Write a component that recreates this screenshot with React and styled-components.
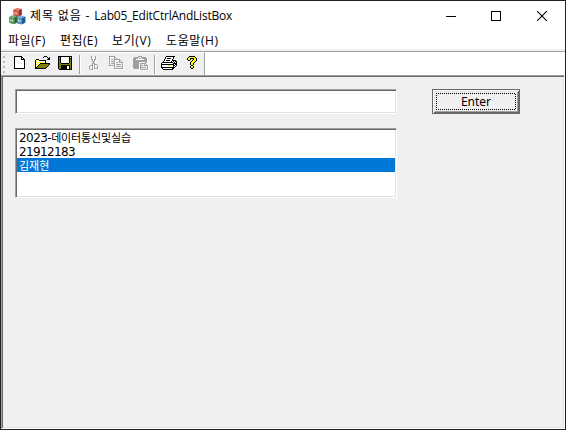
import React from "react";
import styled, { createGlobalStyle } from "styled-components";

const GlobalStyle = createGlobalStyle`
  * { box-sizing: border-box; }
  html, body { margin: 0; padding: 0; overflow: hidden; }
`;

const Window = styled.div`
  width: 566px;
  height: 430px;
  display: flex;
  flex-direction: column;
  border: 1px solid #232124;
  background: #fff;
  color: #000;
  font-family: "Open Sans", "Noto Sans CJK KR", sans-serif;
  font-size: 12px;
  user-select: none;
`;

const TitleBar = styled.header`
  display: flex;
  align-items: center;
  height: 30px;
  padding-left: 8px;
`;

const Title = styled.h1`
  flex: 1;
  margin: 0 0 0 4px;
  font-size: 12px;
  font-weight: 400;
  line-height: 20px;
  white-space: pre;
`;

const Run = styled.span`
  letter-spacing: ${(p) => p.$tracking};
`;

const CaptionButton = styled.button`
  display: flex;
  align-items: center;
  justify-content: center;
  width: 46px;
  height: 30px;
  padding: 0 0 0 ${(p) => p.$nudge || 0}px;
  border: 0;
  background: transparent;
`;

const MenuBar = styled.nav`
  display: flex;
  height: 18px;
  padding-left: 7px;
`;

const MenuItem = styled.span`
  width: ${(p) => p.$width}px;
  line-height: 19px;
  white-space: nowrap;
  letter-spacing: ${(p) => p.$tracking};
`;

const ToolBand = styled.div`
  height: 26px;
  border-top: 2px solid #f0f0f0;
  flex: none;
`;

const ToolRow = styled.div`
  height: 24px;
  border-top: 1px solid #a0a0a0;
`;

const ToolBar = styled.div`
  display: flex;
  width: 204px;
  height: 23px;
  padding-top: 3px;
  background: #f0f0f0;
  border-top: 1px solid #fff;
  border-right: 1px solid #a0a0a0;
`;

const Grip = styled.div`
  width: 2px;
  height: 17px;
  margin: 0 9px 0 2px;
  background: repeating-linear-gradient(#b8b8b8 0 2px, transparent 2px 5px);
`;

const Tool = styled.span`
  width: ${(p) => p.$width}px;
  height: 18px;
  flex: none;
`;

const Separator = styled.span`
  width: 2px;
  height: 19px;
  margin: -1px ${(p) => p.$after}px 0 0;
  border-left: 1px solid #a0a0a0;
  border-right: 1px solid #fff;
`;

const View = styled.main`
  flex: 1;
  display: flex;
  gap: 35px;
  padding: 13px 0 0 13px;
  background: #f0f0f0;
  border: 1px solid;
  border-color: #a0a0a0 #fff #fff #a0a0a0;
  box-shadow: inset 1px 1px #696969, inset -1px -1px #e3e3e3;
`;

const Fields = styled.section`
  display: flex;
  flex-direction: column;
  gap: 14px;
  width: 382px;
`;

const sunken = `
  border: 1px solid;
  border-color: #a0a0a0 #fff #fff #a0a0a0;
  box-shadow: inset 1px 1px #696969, inset -1px -1px #e3e3e3;
  background: #fff;
`;

const TextInput = styled.input`
  ${sunken}
  width: 382px;
  height: 25px;
  padding: 2px 4px;
  outline: 0;
  border-radius: 0;
`;

const ListBox = styled.ul`
  ${sunken}
  height: 70px;
  margin: 0;
  padding: 1px;
  list-style: none;
  font-family: "DejaVu Sans", sans-serif;
`;

const ListItem = styled.li`
  display: flex;
  height: 14px;
  padding: 1px 0 0 2px;
  font-size: 12px;
  line-height: 14px;
  white-space: nowrap;
  color: ${(p) => (p.$selected ? "#fff" : "#000")};
  background: ${(p) => (p.$selected ? "#0078d7" : "transparent")};
`;

const Hangul = styled.span`
  line-height: 12px;
  font-family: "Noto Sans CJK KR", sans-serif;
  font-size: 11px;
  letter-spacing: ${(p) => p.$tracking || "0"};
`;

const EnterButton = styled.button`
  width: 88px;
  height: 25px;
  padding: 3px;
  border: 1px solid #696969;
  border-radius: 0;
  background: #f0f0f0;
  box-shadow: inset 1px 1px #fff, inset -1px -1px #696969, inset 2px 2px #e3e3e3,
    inset -2px -2px #a0a0a0;
  font-family: "Noto Sans", sans-serif;
  font-size: 12px;
  color: #000;
`;

const FocusRing = styled.span`
  position: relative;
  display: block;
  width: 80px;
  height: 17px;
  line-height: 17px;
  text-align: center;
  svg { position: absolute; left: 0; top: 0; }
`;

const Drawing = styled.svg`
  display: block;
  flex: none;
`;

const INK = {
  k: "#000",
  w: "#fff",
  y: "#ff0",
  o: "#808000",
  d: "#a0a0a0",
  b: "#f0f0f0",
};

function PixelIcon({ rows }) {
  const width = Math.max(...rows.map((r) => r.length));
  return (
    <Drawing width={width} height={rows.length} shapeRendering="crispEdges">
      {rows.flatMap((row, y) =>
        [...row].map((c, x) =>
          INK[c] ? <rect key={`${x}-${y}`} x={x} y={y} width="1" height="1" fill={INK[c]} /> : null
        )
      )}
    </Drawing>
  );
}

const NEW = [
  "kkkkkkkk",
  "kwwwwwwkk",
  "kwwwwwwkwk",
  "kwwwwwwkkkk",
  "kwwwwwwwwwk",
  "kwwwwwwwwwk",
  "kwwwwwwwwwk",
  "kwwwwwwwwwk",
  "kwwwwwwwwwk",
  "kwwwwwwwwwk",
  "kwwwwwwwwwk",
  "kwwwwwwwwwk",
  "kkkkkkkkkkk",
];

const OPEN = [
  ".........kkk",
  "........k...k.k",
  ".............kk",
  ".kkk........kkk",
  "kywykkkkkkk",
  "kwywywywywk",
  "kywywywywyk",
  "kwywykkkkkkkkkk",
  "kywykoooooooook",
  "kwykoooooooook",
  "kykoooooooook",
  "kkoooooooook",
  "kkkkkkkkkkk",
];

const SAVE = [
  "kkkkkkkkkkkkkk",
  "kokwwwwwwwwkwk",
  "kokwwwwwwwwkkk",
  "kokwwwwwwwwkok",
  "kokwwwwwwwwkok",
  "kokwwwwwwwwkok",
  "kokwwwwwwwwkok",
  "kookkkkkkkkook",
  "kooooooooooook",
  "kookkkkkkkkkok",
  "kookkkkkkwwkok",
  "kookkkkkkwwkok",
  "kookkkkkkwwkok",
  ".kkkkkkkkkkkkk",
];

const CUT = [
  "..d...d",
  "..dw..dw",
  "..dw..dw",
  "..ddwddw",
  "...dwdw",
  "...dddw",
  "....dw",
  "...dddw",
  "...dwddd",
  ".dddwdwwd",
  "d..dwdw.dw",
  "dw.dwdw.dw",
  "dw.dwddddw",
  ".dddw.wwww",
  "..www",
];

const COPY = [
  "dddddd",
  "dwwwwdd",
  "dwbbbdwd",
  "dwddbdddddd",
  "dwbbbdwwwwdd",
  "dwddddwbbbdwd",
  "dwbbbdwddbdddd",
  "dwddddwbbbwwwdw",
  "dwbbbdwdddddbdw",
  "ddddddwbbbbbbdw",
  ".wwwwdwdddddbdw",
  ".....dwbbbbbbdw",
  ".....dddddddddw",
  "......wwwwwwwww",
];

const PASTE = [
  ".....dddd",
  ".dddddwwddddd",
  "dddddwddwddddd",
  "dddwwwwwwwwdddw",
  "ddddddddddddddw",
  "ddddddddddddddw",
  "ddddddwwwwwwddw",
  "ddddddwddddddww",
  "ddddddwdbbbdbdw",
  "ddddddwdddbddddw",
  "ddddddwdbbbbbbdw",
  "ddddddwddddddbdw",
  ".dddddwdbbbbbbdw",
  "......wddddddddw",
  "......wwwwwwwwww",
];

const PRINT = [
  ".....kkkkkkkkk",
  "....kwwwwwwwk",
  "....kwkkkkwwk",
  "...kwwwwwwwk",
  "...kwkkkkwwkkkk",
  "..kwwwwwwwkwkwkk",
  ".kkkkkkkkkkkwkwk",
  "kwwwwwwwwwwwkkkk",
  "kkkkkkkkkkkkkwkk",
  "kwwwwwwyyywwkkwk",
  "kwwwwwwwwwwwkwk",
  "kkkkkkkkkkkkkk",
  ".kwwwwwwwwwkk",
  "..kkkkkkkkkk",
];

const HELP = [
  "..kkkkkk",
  ".kyyyyyyk",
  "kyykkkkyyk",
  "kyyk..kyyk",
  ".kk..kyyyk",
  "....kyyyk",
  "...kyyyk",
  "...kyyk",
  "...kyyk",
  "....kk",
  "...kyyk",
  "...kyyk",
  "....kk",
];

const TOOLS = [
  { id: "new", width: 21, rows: NEW },
  { id: "open", width: 23, rows: OPEN },
  { id: "save", width: 21, rows: SAVE },
  { id: "s1", separator: true, after: 8 },
  { id: "cut", width: 20, rows: CUT },
  { id: "copy", width: 24, rows: COPY },
  { id: "paste", width: 21, rows: PASTE },
  { id: "s2", separator: true, after: 5 },
  { id: "print", width: 26, rows: PRINT },
  { id: "help", width: 12, rows: HELP },
];

function Cube({ x, y, light, mid, dark }) {
  return (
    <g transform={`translate(${x} ${y})`}>
      <path d="M0 1.6 3.5 0 8.6.8 5.2 2.4Z" fill={light} />
      <path d="M0 1.6 5.2 2.4V9L.3 7.8Z" fill={mid} />
      <path d="M5.2 2.4 8.6.8V7L5.2 9Z" fill={dark} />
      <path d="M1.7 3.6v2.8M3.6 4v2.6M1.7 5.1l1.9.3" stroke="#fff" strokeWidth=".7" opacity=".8" />
    </g>
  );
}

function AppIcon() {
  return (
    <Drawing width="17" height="17" viewBox="0 0 17 17">
      <Cube x={4.2} y={0} light="#e2786c" mid="#d5483c" dark="#a3261f" />
      <Cube x={0} y={7.2} light="#76ad6c" mid="#4b9a50" dark="#28642f" />
      <Cube x={7.8} y={7.6} light="#78b0da" mid="#4690c6" dark="#205a93" />
    </Drawing>
  );
}

export default function App() {
  return (
    <>
      <GlobalStyle />
      <Window>
        <TitleBar>
          <AppIcon />
          <Title>
            <Run $tracking="0.85px">제목 없음 - </Run>
            <Run $tracking="-0.22px">Lab05_EditCtrlAndListBox</Run>
          </Title>
          <CaptionButton aria-label="Minimize" $nudge={2}>
            <Drawing width="10" height="10" shapeRendering="crispEdges">
              <path d="M0 5.5h10" stroke="#000" />
            </Drawing>
          </CaptionButton>
          <CaptionButton aria-label="Maximize">
            <Drawing width="10" height="10" shapeRendering="crispEdges">
              <path d="M.5.5h9v9h-9z" fill="none" stroke="#000" />
            </Drawing>
          </CaptionButton>
          <CaptionButton aria-label="Close">
            <Drawing width="10" height="10">
              <path d="m0 0 10 10M10 0 0 10" stroke="#000" strokeWidth="1.1" />
            </Drawing>
          </CaptionButton>
        </TitleBar>
        <MenuBar>
          <MenuItem $width={52} $tracking="0.5px">파일(F)</MenuItem>
          <MenuItem $width={52} $tracking="0.4px">편집(E)</MenuItem>
          <MenuItem $width={54} $tracking="0.6px">보기(V)</MenuItem>
          <MenuItem $width={56} $tracking="0.6px">도움말(H)</MenuItem>
        </MenuBar>
        <ToolBand>
          <ToolRow>
            <ToolBar>
              <Grip />
              {TOOLS.map((t) =>
                t.separator ? (
                  <Separator key={t.id} $after={t.after} />
                ) : (
                  <Tool key={t.id} $width={t.width}>
                    <PixelIcon rows={t.rows} />
                  </Tool>
                )
              )}
            </ToolBar>
          </ToolRow>
        </ToolBand>
        <View>
          <Fields>
            <TextInput aria-label="Text" />
            <ListBox>
              <ListItem>
                <Run $tracking="-0.55px">2023-</Run>
                <Hangul $tracking="-0.15px">데이터통신및실습</Hangul>
              </ListItem>
              <ListItem>
                <Run $tracking="-0.65px">21912183</Run>
              </ListItem>
              <ListItem $selected>
                <Hangul>김재현</Hangul>
              </ListItem>
            </ListBox>
          </Fields>
          <EnterButton>
            <FocusRing>
              <Drawing width="80" height="17" shapeRendering="crispEdges">
                <path
                  d="M0 .5h80M0 16.5h80M.5 2v14M79.5 1v15"
                  stroke="#000"
                  strokeDasharray="1 1"
                />
              </Drawing>
              Enter
            </FocusRing>
          </EnterButton>
        </View>
      </Window>
    </>
  );
}
